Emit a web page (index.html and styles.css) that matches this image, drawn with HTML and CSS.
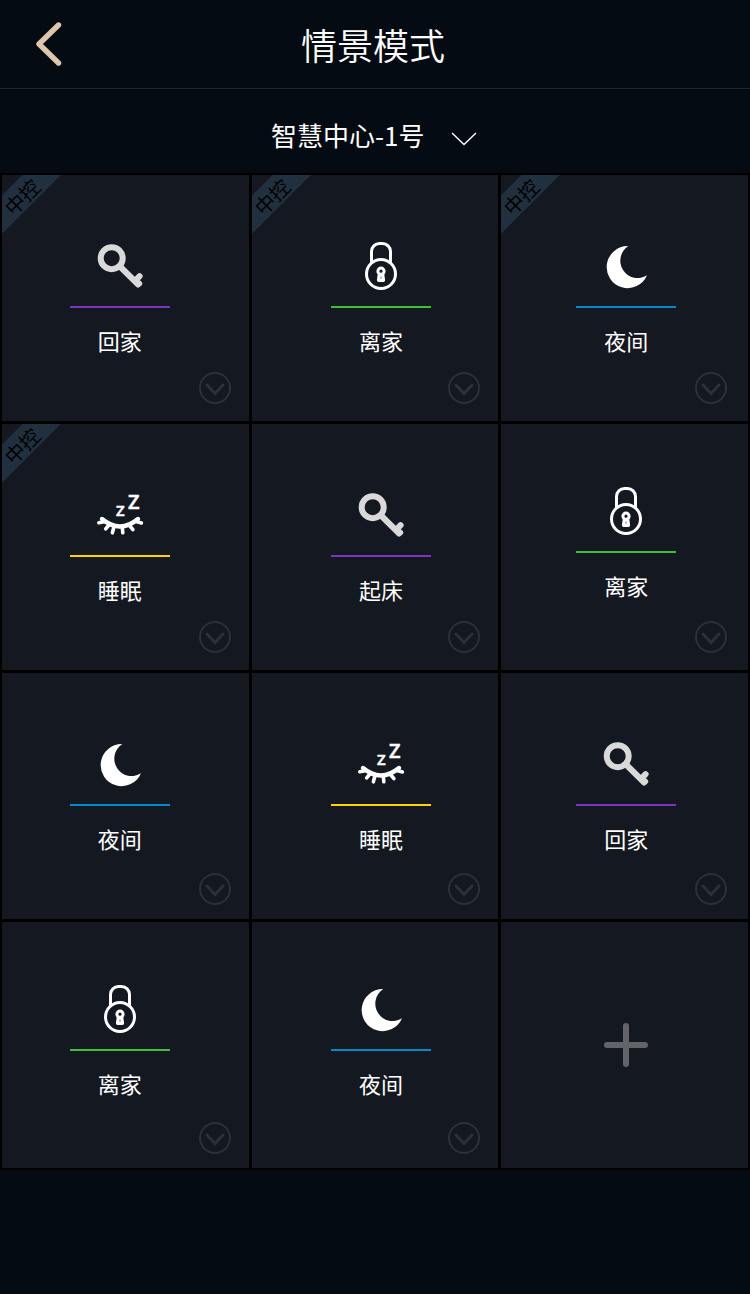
FILE: index.html
```html
<!DOCTYPE html>
<html lang="zh-CN">
<head>
<meta charset="utf-8">
<meta name="viewport" content="width=device-width, initial-scale=1">
<title>情景模式</title>
<link rel="stylesheet" href="styles.css">
</head>
<body>
<svg class="sprite" aria-hidden="true">
  <symbol id="key" viewBox="0 0 48 48">
    <g fill="none" stroke="#d9d9d9" stroke-width="6" stroke-linecap="round" stroke-linejoin="round">
      <circle cx="15.7" cy="16.2" r="11"/>
      <path d="M24 24.5 42.2 42.5 43.2 41.5M39 39 43.6 34.1"/>
    </g>
  </symbol>
  <symbol id="lock" viewBox="0 0 48 48">
    <g fill="none" stroke="#fff" stroke-width="3">
      <circle cx="24" cy="32" r="14.5"/>
      <path d="M14.5 21V9.5a8 8 0 0 1 8-8h3a8 8 0 0 1 8 8V21"/>
      <circle cx="24" cy="29.2" r="3.1"/>
      <path d="M22.4 32.5 21.6 38.2h4.8L25.6 32.5" stroke-linejoin="round" stroke-width="3.4"/>
    </g>
  </symbol>
  <symbol id="moon" viewBox="0 0 48 48">
    <path fill="#fff" d="M26.3 4.1A21 21 0 1 0 45 33.3A17.3 17.3 0 1 1 26.3 4.1z"/>
  </symbol>
  <symbol id="eye" viewBox="0 0 48 48">
    <g fill="none" stroke="#fff" stroke-width="3.6" stroke-linecap="round">
      <path d="M6 28Q24 43 42 28" stroke-width="4.4"/>
      <path d="M2.8 31.7 8 30.8M9.7 37.8 12.5 34.5M16.4 41.8 17.6 37M26.8 41.8 26.4 37M36.9 38.6 34 35M45.4 32 40 30.5"/>
    </g>
  </symbol>
  <symbol id="expand" viewBox="0 0 32 32">
    <g fill="none" stroke="#2c3038">
      <circle cx="16" cy="16" r="15" stroke-width="2"/>
      <path d="M8 13 16 21.5 24 13" stroke-width="3" stroke-linecap="round"/>
    </g>
  </symbol>
</svg>

<header class="topbar">
  <button class="back" type="button" aria-label="返回">
    <svg width="26" height="44" viewBox="0 0 26 44"><path d="M22.5 3 3 22 22.5 41" fill="none" stroke="#dfc6ab" stroke-width="5.4" stroke-linecap="round" stroke-linejoin="round"/></svg>
  </button>
  <h1 class="title">情景模式</h1>
</header>

<main>
  <label class="hub">
    <select class="hub-select" aria-label="控制中心">
      <option>智慧中心-1号</option>
    </select>
    <svg class="hub-arrow" width="26" height="14" viewBox="0 0 26 14" aria-hidden="true"><path d="M1 1 13 12.5 25 1" fill="none" stroke="#fff" stroke-width="1.4"/></svg>
  </label>

  <ul class="grid">
    <li class="tile">
      <span class="ribbon"><span class="ribbon-text">中控</span></span>
      <button class="scene scene-purple" type="button"><svg class="icon"><use href="#key"/></svg><span class="name">回家</span></button>
      <button class="more" type="button" aria-label="展开"><svg class="more-icon"><use href="#expand"/></svg></button>
    </li>
    <li class="tile">
      <span class="ribbon"><span class="ribbon-text">中控</span></span>
      <button class="scene scene-green" type="button"><svg class="icon"><use href="#lock"/></svg><span class="name">离家</span></button>
      <button class="more" type="button" aria-label="展开"><svg class="more-icon"><use href="#expand"/></svg></button>
    </li>
    <li class="tile">
      <span class="ribbon"><span class="ribbon-text">中控</span></span>
      <button class="scene scene-blue" type="button"><svg class="icon"><use href="#moon"/></svg><span class="name">夜间</span></button>
      <button class="more" type="button" aria-label="展开"><svg class="more-icon"><use href="#expand"/></svg></button>
    </li>
    <li class="tile">
      <span class="ribbon"><span class="ribbon-text">中控</span></span>
      <button class="scene scene-yellow" type="button"><svg class="icon"><use href="#eye"/><text class="zed" x="20" y="25" font-size="15">Z</text><text class="zed" x="32" y="18" font-size="20">Z</text></svg><span class="name">睡眠</span></button>
      <button class="more" type="button" aria-label="展开"><svg class="more-icon"><use href="#expand"/></svg></button>
    </li>
    <li class="tile">
      <button class="scene scene-purple" type="button"><svg class="icon"><use href="#key"/></svg><span class="name">起床</span></button>
      <button class="more" type="button" aria-label="展开"><svg class="more-icon"><use href="#expand"/></svg></button>
    </li>
    <li class="tile tile-raised">
      <button class="scene scene-green" type="button"><svg class="icon"><use href="#lock"/></svg><span class="name">离家</span></button>
      <button class="more" type="button" aria-label="展开"><svg class="more-icon"><use href="#expand"/></svg></button>
    </li>
    <li class="tile tile-low">
      <button class="scene scene-blue" type="button"><svg class="icon"><use href="#moon"/></svg><span class="name">夜间</span></button>
      <button class="more" type="button" aria-label="展开"><svg class="more-icon"><use href="#expand"/></svg></button>
    </li>
    <li class="tile tile-low">
      <button class="scene scene-yellow" type="button"><svg class="icon"><use href="#eye"/><text class="zed" x="20" y="25" font-size="15">Z</text><text class="zed" x="32" y="18" font-size="20">Z</text></svg><span class="name">睡眠</span></button>
      <button class="more" type="button" aria-label="展开"><svg class="more-icon"><use href="#expand"/></svg></button>
    </li>
    <li class="tile tile-low">
      <button class="scene scene-purple" type="button"><svg class="icon"><use href="#key"/></svg><span class="name">回家</span></button>
      <button class="more" type="button" aria-label="展开"><svg class="more-icon"><use href="#expand"/></svg></button>
    </li>
    <li class="tile tile-raised tile-low">
      <button class="scene scene-green" type="button"><svg class="icon"><use href="#lock"/></svg><span class="name">离家</span></button>
      <button class="more" type="button" aria-label="展开"><svg class="more-icon"><use href="#expand"/></svg></button>
    </li>
    <li class="tile tile-raised tile-low">
      <button class="scene scene-blue" type="button"><svg class="icon"><use href="#moon"/></svg><span class="name">夜间</span></button>
      <button class="more" type="button" aria-label="展开"><svg class="more-icon"><use href="#expand"/></svg></button>
    </li>
    <li class="tile">
      <button class="add" type="button" aria-label="添加情景">
        <svg width="44" height="44" viewBox="0 0 44 44"><path d="M22 3V41M3 22H41" stroke="#62646a" stroke-width="6" stroke-linecap="round"/></svg>
      </button>
    </li>
  </ul>
</main>
</body>
</html>
```
FILE: styles.css
```css
* { box-sizing: border-box; }

body {
  margin: 0;
  min-height: 100vh;
  background: #050b13;
  color: #fff;
  font-family: "Noto Sans CJK SC", sans-serif;
}

button,
select {
  margin: 0;
  padding: 0;
  border: 0;
  background: none;
  color: inherit;
  font: inherit;
  cursor: pointer;
}

svg { display: block; }

.sprite {
  position: absolute;
  width: 0;
  height: 0;
}

.topbar {
  display: grid;
  grid-template-columns: 1fr auto 1fr;
  align-items: center;
  height: 89px;
  padding-right: 4px;
  border-bottom: 1px solid #20262e;
}

.back {
  justify-self: start;
  padding: 0 36px;
}

.title {
  margin: 0;
  font-size: 36px;
  font-weight: 350;
  line-height: 48px;
}

.hub {
  display: flex;
  justify-content: center;
  align-items: center;
  gap: 26px;
  height: 84px;
  padding: 8px 2px 0 0;
}

.hub-select {
  appearance: none;
  font-size: 26px;
  line-height: 40px;
}

.hub-select option { color: #000; }

.hub-arrow {
  margin-top: 8px;
  pointer-events: none;
}

.grid {
  display: grid;
  grid-template-columns: repeat(3, 1fr);
  grid-auto-rows: minmax(246px, auto);
  gap: 3px;
  margin: 0;
  padding: 2px;
  background: #000;
  list-style: none;
}

.tile {
  position: relative;
  display: flex;
  flex-direction: column;
  justify-content: space-between;
  padding: 67px 0 17px;
  background: #141820;
}

.tile-raised { padding-top: 63px; }
.tile-low { padding-bottom: 14px; }

.tile:nth-child(3n+1) { padding-right: 11px; }
.tile:nth-child(3n+2) { padding-left: 12px; }
.tile:nth-child(3n) { padding-left: 3px; }

.scene {
  display: flex;
  flex-direction: column;
  align-items: center;
}

.icon {
  width: 48px;
  height: 48px;
  overflow: visible;
}

.zed {
  fill: #fff;
  font-family: "Open Sans", sans-serif;
  font-weight: 600;
  stroke: #fff;
  stroke-width: 0.5px;
}

.name {
  width: 100px;
  margin-top: 16px;
  padding-top: 16px;
  border-top: 2px solid var(--accent);
  font-size: 22px;
  line-height: 32px;
}

.scene-purple { --accent: #7e34c1; }
.scene-green { --accent: #3cc038; }
.scene-blue { --accent: #038ac9; }
.scene-yellow { --accent: #ffd200; }

.more {
  align-self: flex-end;
  margin-right: 18px;
}

.tile:nth-child(3n+1) .more { margin-right: 7px; }
.tile:nth-child(3n) .more { margin-right: 21px; }

.more-icon {
  width: 32px;
  height: 32px;
}

.ribbon {
  position: absolute;
  top: 0;
  left: 0;
  width: 60px;
  height: 60px;
  padding-top: 12px;
  background: linear-gradient(135deg, transparent 14px, #20303e 15px 41px, transparent 42px);
}

.ribbon-text {
  display: block;
  width: 40px;
  color: #000;
  font-size: 20px;
  line-height: 20px;
  text-align: center;
  transform: rotate(-45deg);
}

.add {
  display: grid;
  place-items: center;
  flex: 1;
  margin: -50px 0 0;
}
```
